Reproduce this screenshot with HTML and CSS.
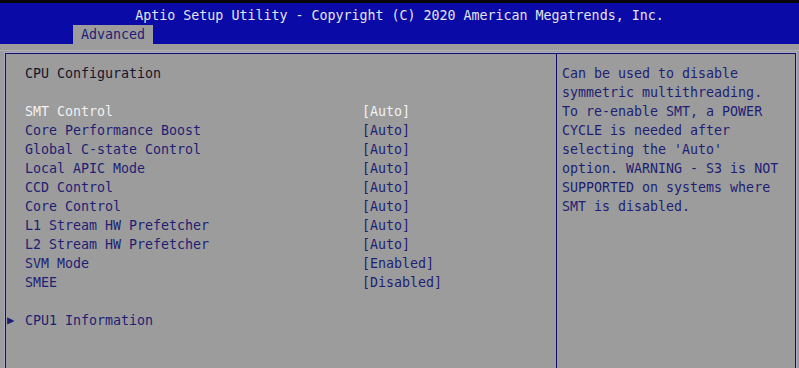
FILE: index.html
```html
<!DOCTYPE html>
<html lang="en">
<head>
  <meta charset="UTF-8">
  <title>Aptio Setup Utility</title>
  <meta name="viewport" content="width=device-width, initial-scale=1">
  <link rel="stylesheet" href="styles.css">
</head>
<body>

<header>
  <div class="title">Aptio Setup Utility - Copyright (C) 2020 American Megatrends, Inc.</div>
  <div class="tabs">
    <span class="tab">Advanced</span>
  </div>
</header>
<div class="rule"></div>

<!-- Main frame -->
<div class="frame">
  <div class="main">
    <div class="line">CPU Configuration</div>
    <div class="line"></div>

    <div class="options">
      <div class="opt selected"><span>SMT Control</span><span>[Auto]</span></div>
      <div class="opt"><span>Core Performance Boost</span><span>[Auto]</span></div>
      <div class="opt"><span>Global C-state Control</span><span>[Auto]</span></div>
      <div class="opt"><span>Local APIC Mode</span><span>[Auto]</span></div>
      <div class="opt"><span>CCD Control</span><span>[Auto]</span></div>
      <div class="opt"><span>Core Control</span><span>[Auto]</span></div>
      <div class="opt"><span>L1 Stream HW Prefetcher</span><span>[Auto]</span></div>
      <div class="opt"><span>L2 Stream HW Prefetcher</span><span>[Auto]</span></div>
      <div class="opt"><span>SVM Mode</span><span>[Enabled]</span></div>
      <div class="opt"><span>SMEE</span><span>[Disabled]</span></div>
    </div>

    <div class="line"></div>
    <div class="line submenu"><span class="arrow">&#9654;</span>CPU1 Information</div>
  </div>

  <!-- Help -->
  <div class="help">
    Can be used to disable<br>
    symmetric multithreading.<br>
    To re-enable SMT, a POWER<br>
    CYCLE is needed after<br>
    selecting the 'Auto'<br>
    option. WARNING - S3 is NOT<br>
    SUPPORTED on systems where<br>
    SMT is disabled.
  </div>
</div>

</body>
</html>
```

FILE: styles.css
```css
html, body {
  height: 100%;
}
body {
  margin: 0;
  display: flex;
  flex-direction: column;
  background: #9c9c9c;
  font-family: "DejaVu Sans Mono", "Liberation Mono", monospace;
  font-size: 13.3px;
  line-height: 19px;
  color: #1e1e74;
  overflow: hidden;
}
header {
  background: #0a0aa6;
  border-top: 3px solid #050505;
}
.title {
  padding-top: 3px;
  text-align: center;
  color: #e4e4ee;
}
.tabs {
  display: flex;
  padding-left: 73px;
}
.tab {
  background: #9c9c9c;
  padding: 0 8px;
  color: #1e1e74;
}
.rule {
  height: 1px;
  margin-top: 6px;
  background: #b0b0b4;
}
.frame {
  flex: 1;
  display: flex;
  margin: 2px 3px 0 5px;
  border: 1px solid #10106a;
  border-bottom: 0;
  box-shadow: 0 0 0 1px #a8a8c8;
}
.main {
  width: 531px;
  padding: 10px 0 0 19px;
  border-right: 1px solid #10106a;
}
.line {
  height: 19px;
  color: #141430;
}
.opt {
  display: grid;
  grid-template-columns: 337px auto;
}
.opt.selected {
  color: #f2f2f2;
}
.submenu {
  position: relative;
  color: #1e1e74;
}
.arrow {
  position: absolute;
  left: -18px;
  font-size: 12px;
}
.help {
  flex: 1;
  padding: 10px 0 0 5px;
}
```
